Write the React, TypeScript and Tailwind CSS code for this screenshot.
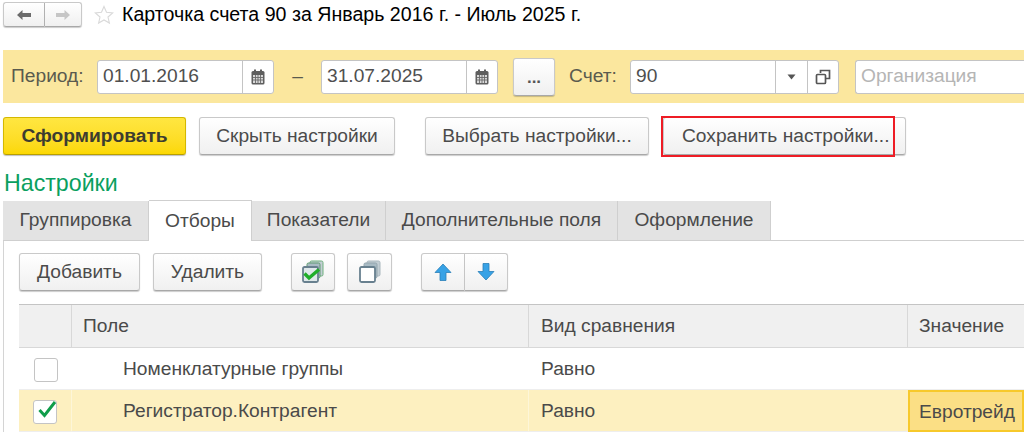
const fieldBox = "flex h-[34px] items-stretch rounded-[3px] border border-[#c4c4c4] bg-white";
const btn =
  "flex items-center justify-center rounded-[3px] border border-[#c9c9c9] border-b-[#a8a8a8] bg-gradient-to-b from-white to-[#f0f0f0] text-[#4b4b4b] shadow-[0_1px_1px_rgba(0,0,0,0.2)]";

function CalendarIcon() {
  return (
    <svg width="14" height="16" viewBox="0 0 14 16">
      <rect x="0.5" y="2" width="13" height="13.5" rx="1.5" fill="#5f5f5f" />
      <rect x="3" y="0.5" width="2" height="3" fill="#5f5f5f" />
      <rect x="9" y="0.5" width="2" height="3" fill="#5f5f5f" />
      <rect x="2" y="6" width="10" height="8" fill="#d8d8d8" />
      <path d="M2 8.5h10M2 11h10M4.5 6v8M7 6v8M9.5 6v8" stroke="#6a6a6a" strokeWidth="0.9" />
    </svg>
  );
}

function DateField({ value, width }: { value: string; width: string }) {
  return (
    <div className={`${fieldBox} ${width}`}>
      <div className="flex flex-1 items-center pl-[5px] text-[#4f4f4f]">{value}</div>
      <div className="flex w-[31px] items-center justify-center border-l border-[#c4c4c4]">
        <CalendarIcon />
      </div>
    </div>
  );
}

function Star() {
  return (
    <svg width="20" height="20" viewBox="0 0 20 20" className="ml-[12px]">
      <path
        d="M10 1.5l2.5 5.8 6.2.6-4.7 4.1 1.4 6.1L10 15l-5.4 3.1 1.4-6.1-4.7-4.1 6.2-.6z"
        fill="#fff"
        stroke="#d9d9d9"
        strokeWidth="1.1"
      />
    </svg>
  );
}

function StackIcon({ checked }: { checked?: boolean }) {
  return (
    <svg width="24" height="24" viewBox="0 0 24 24">
      <rect x="9" y="1" width="13" height="15" rx="1.5" fill="#c3ced4" stroke={checked ? "#6fb07f" : "#aab7be"} />
      <rect x="6" y="3" width="13" height="15" rx="1.5" fill="#a9bbc4" stroke={checked ? "#5f9c70" : "#94a5ae"} />
      <rect x="2" y="7" width="15" height="15" rx="1.5" fill={checked ? "#dfe8ea" : "#fff"} stroke="#68808f" strokeWidth="1.8" />
      {checked && <path d="M3.500 13.500l4.500 4.500 10-8.500" fill="none" stroke="#1fae2a" strokeWidth="3.400" />}
    </svg>
  );
}

function ArrowIcon({ down }: { down?: boolean }) {
  return (
    <svg width="18" height="20" viewBox="0 0 18 20">
      <path
        d={down ? "M6 1.5h6v8h5L9 18 1 9.5h5z" : "M6 18.5h6v-8h5L9 2 1 10.5h5z"}
        fill="#37a2e6"
        stroke="#2a7fb8"
        strokeWidth="0.8"
      />
    </svg>
  );
}

const tabs = [
  { label: "Группировка", width: "w-[146px]" },
  { label: "Отборы", width: "w-[103px]", active: true },
  { label: "Показатели", width: "w-[134px]" },
  { label: "Дополнительные поля", width: "w-[232px]" },
  { label: "Оформление", width: "w-[153px]" },
];

export default function App() {
  return (
    <div className="h-[434px] w-[1024px] overflow-hidden bg-white pl-[3px] font-['Liberation_Sans',Arial,sans-serif] text-[19.2px]">
      {/* Header */}
      <div className="flex h-[27px] items-center pt-[2px]">
        <div className={`${btn} h-[25px] w-[42px] rounded-r-none border-r-[#b5b5b5]`}>
          <svg width="16" height="12" viewBox="0 0 16 12">
            <path d="M1 6l5.500-5v3H15v4H6.500v3z" fill="#6b6b6b" />
          </svg>
        </div>
        <div className={`${btn} h-[25px] w-[37px] rounded-l-none border-l-0`}>
          <svg width="16" height="12" viewBox="0 0 16 12">
            <path d="M15 6L9.500 1v3H1v4h8.500v3z" fill="#c6c6c6" />
          </svg>
        </div>
        <Star />
        <div className="ml-[8px] text-[19.6px] whitespace-nowrap text-black">
          Карточка счета 90 за Январь 2016 г. - Июль 2025 г.
        </div>
      </div>

      {/* Period bar */}
      <div className="mt-[23px] flex h-[53px] items-center bg-[#fbe79e] pl-[8px] text-[#5a5a4e]">
        <span className="w-[86px]">Период:</span>
        <DateField value="01.01.2016" width="w-[177px]" />
        <span className="w-[47px] text-center">–</span>
        <DateField value="31.07.2025" width="w-[177px]" />
        <div className={`${btn} ml-[15px] h-[38px] w-[42px] pt-[2px] text-[17px] font-bold text-[#555]`}>...</div>
        <span className="ml-[14px] w-[61px]">Счет:</span>
        <div className={`${fieldBox} w-[209px]`}>
          <div className="flex flex-1 items-center pl-[5px] text-[#4f4f4f]">90</div>
          <div className="flex w-[32px] items-center justify-center border-l border-[#c4c4c4]">
            <svg width="9" height="6" viewBox="0 0 9 6">
              <path d="M0.500 0.500h8L4.500 5.500z" fill="#555" />
            </svg>
          </div>
          <div className="flex w-[31px] items-center justify-center border-l border-[#c4c4c4]">
            <svg width="16" height="16" viewBox="0 0 16 16" fill="none" stroke="#555" strokeWidth="1.7">
              <path d="M5.500 4V1.500h9v8H11" />
              <rect x="1.500" y="5.500" width="9" height="9" rx="1" />
            </svg>
          </div>
        </div>
        <div className={`${fieldBox} ml-[16px] flex-1 items-center rounded-r-none border-r-0 pl-[5px] text-[#b5b5b5]`}>
          <span className="self-center">Организация</span>
        </div>
      </div>

      {/* Command bar */}
      <div className="relative mt-[14px] flex h-[38px]">
        <div className="flex w-[183px] items-center justify-center rounded-[3px] border border-[#d4b800] border-b-[#b89f00] bg-gradient-to-b from-[#ffe640] to-[#fcd800] text-[19.2px] font-bold text-[#3d3d30] shadow-[0_1px_1px_rgba(0,0,0,0.25)]">
          Сформировать
        </div>
        <div className={`${btn} ml-[13px] w-[196px]`}>Скрыть настройки</div>
        <div className={`${btn} ml-[30px] w-[224px]`}>Выбрать настройки...</div>
        <div className={`${btn} ml-[14px] w-[243px] justify-start pl-[18px]`}>Сохранить настройки...</div>
        <div className="absolute top-[-1px] left-[658px] h-[41px] w-[234px] border-[2px] border-[#ee1c25]" />
      </div>

      <div className="mt-[12px] h-[33px] pl-[1px] text-[23.2px] leading-[32px] text-[#0aa060]">Настройки</div>

      {/* Tabs */}
      <div className="flex h-[41px] border-b border-[#cfcfcf]">
        {tabs.map((tab) => (
          <div
            key={tab.label}
            className={`flex items-center justify-center border-r border-[#cfcfcf] text-[#4a4a4a] ${tab.width} ${
              tab.active
                ? "relative z-10 mb-[-1px] border-t border-t-[#cfcfcf] bg-white"
                : "mt-[1px] bg-[#e3e3e3]"
            }`}
          >
            {tab.label}
          </div>
        ))}
      </div>

      {/* Panel */}
      <div className="border-l border-[#d4d4d4] pl-[15px]">
        <div className="flex h-[63px] pt-[12px] pb-[13px]">
          <div className={`${btn} w-[121px]`}>Добавить</div>
          <div className={`${btn} ml-[13px] w-[109px]`}>Удалить</div>
          <div className={`${btn} ml-[29px] w-[44px]`}>
            <StackIcon checked />
          </div>
          <div className={`${btn} ml-[12px] w-[45px]`}>
            <StackIcon />
          </div>
          <div className={`${btn} ml-[29px] w-[44px] rounded-r-none`}>
            <ArrowIcon />
          </div>
          <div className={`${btn} w-[43px] rounded-l-none border-l-0`}>
            <ArrowIcon down />
          </div>
        </div>

        {/* Table */}
        <div className="grid grid-cols-[53px_457px_379px_1fr] border-t border-[#c4c4c4] text-[#4a4a4a]">
          <div className="h-[43px] border-r border-b border-[#d8d8d8] bg-[#f0f0f0]" />
          <div className="flex items-center border-r border-b border-[#d8d8d8] bg-[#f0f0f0] pl-[11px]">Поле</div>
          <div className="flex items-center border-r border-b border-[#d8d8d8] bg-[#f0f0f0] pl-[12px]">Вид сравнения</div>
          <div className="flex items-center border-b border-[#d8d8d8] bg-[#f0f0f0] pl-[11px]">Значение</div>

          <div className="flex h-[42px] items-center justify-center border-b border-[#eeeeee] pt-[2px]">
            <div className="h-[24px] w-[24px] rounded-[3px] border border-[#c4c4c4] bg-white" />
          </div>
          <div className="flex items-center border-b border-[#eeeeee] pt-[2px] pl-[51px]">Номенклатурные группы</div>
          <div className="flex items-center border-b border-[#eeeeee] pt-[2px] pl-[12px]">Равно</div>
          <div className="border-b border-[#eeeeee]" />

          <div className="flex h-[42px] items-center justify-center border-r border-b border-[#fdf6d8] border-b-[#eeeeee] bg-[#fdf0c0] pt-[2px]">
            <div className="flex h-[24px] w-[24px] items-center justify-center rounded-[3px] border border-[#c4c4c4] bg-white">
              <svg width="20" height="18" viewBox="0 0 20 18" className="mt-[-5px] ml-[3px] shrink-0">
                <path d="M2.500 10l5 5.500L18 2" fill="none" stroke="#0f9d4a" strokeWidth="3" />
              </svg>
            </div>
          </div>
          <div className="flex items-center border-r border-b border-[#fdf6d8] border-b-[#eeeeee] bg-[#fdf0c0] pt-[2px] pl-[51px]">
            Регистратор.Контрагент
          </div>
          <div className="flex items-center border-b border-[#eeeeee] bg-[#fdf0c0] pt-[2px] pl-[12px]">Равно</div>
          <div className="flex items-center border-[2px] border-[#f7c92b] bg-[#fbdf85] pt-[2px] pl-[9px] whitespace-nowrap">Евротрейд</div>
        </div>
      </div>
    </div>
  );
}
